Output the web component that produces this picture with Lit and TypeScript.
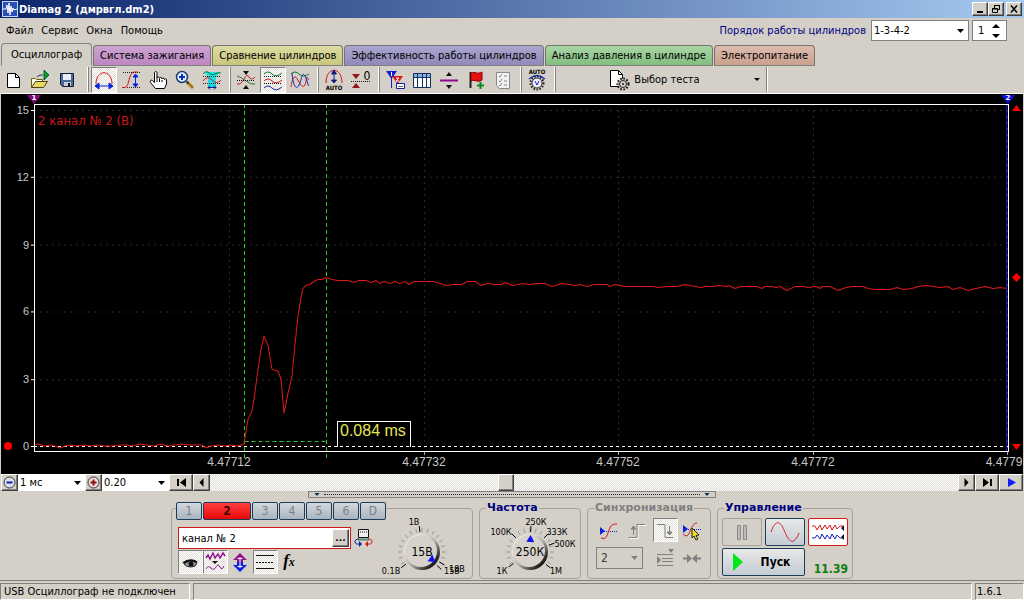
import { LitElement, html, svg, css, TemplateResult } from "lit";
import { customElement, property, state } from "lit/decorators.js";
import { classMap } from "lit/directives/class-map.js";

const ICONS: Record<string, TemplateResult> = {
  page: svg`<path d="M6.500 5.500h8l4 4v10h-12z" fill="#fff" stroke="#000"/><path d="M14.500 5.500v4h4" fill="none" stroke="#000"/>`,
  open: svg`<path d="M3.500 19.500v-9h4l1 1h6v3" fill="#ffe" stroke="#6b5f10"/><path d="M3.500 19.500l4-6h12l-4 6z" fill="#e8d868" stroke="#4a4208"/><path d="M9 9c2-2 4-2 6-2" fill="none" stroke="#333"/><path d="M16 2l5 5-5 5z" fill="#0a9a1a" stroke="#064"/>`,
  save: svg`<path d="M5.500 5.500h13v13h-11l-2-2z" fill="#4a6a96" stroke="#111c38"/><path d="M8 6h8v6H8z" fill="#e8eef8"/><path d="M9 14h7v4H9z" fill="#c8ccd0"/><path d="M13 15h2v3h-2z" fill="#111"/>`,
  hspan: svg`<path d="M4 16c0-15 16-15 16 0" fill="none" stroke="#d01818"/><path d="M3 18h18M7 15l-4 3 4 3zM17 15l4 3-4 3z" fill="#0a20d8" stroke="#0a20d8"/>`,
  vspan: svg`<path d="M3 19.500h3C11 18 9 5 15 4h4" fill="none" stroke="#d01818"/><path d="M4 4.500h17M8 19.500h13" stroke="#222" stroke-dasharray="1 1"/><path d="M16.500 7v11M14 9l2.500-3L19 9zM14 16l2.500 3 2.500-3z" fill="#0a20d8" stroke="#0a20d8"/>`,
  hand: svg`<path d="M9.500 20.500l-5-6c-1-2 1-3 2-2l2 2V5c0-2 2.500-2 2.500 0v5c0-1.500 2.500-1.500 2.500.5 0-1.500 2.500-1.500 2.500.5 0-1.500 2.500-1 2.500.5 0-1.200 2-1 2 .5v4l-2 4.500z" fill="#fff" stroke="#000"/><path d="M11 10v4M13.500 11v3M16 12v2" stroke="#000"/>`,
  zoom: svg`<path d="M14 14l6 6" stroke="#a87a10" stroke-width="3"/><path d="M13.500 13.500l2 2" stroke="#333" stroke-width="2"/><circle cx="9" cy="9" r="5.500" fill="#dff0ff" stroke="#203c78" stroke-width="1.500"/><path d="M6 9h6M9 6v6" stroke="#1028c0" stroke-width="2"/>`,
  zoomwave: svg`<path d="M5 4h14l-3 6v10H8V10z" fill="#18e0e8"/><path d="M3 6q3-4 6-1t6 1 6-1" fill="none" stroke="#087a28"/><path d="M3 13q4-6 9-1t9 0" fill="none" stroke="#c02828"/><path d="M3 8.500h18M3 15.500h18" stroke="#222" stroke-dasharray="1 1"/><path d="M8 19.500h8M10 17.500l-2 2 2 2M14 17.500l2 2-2 2" fill="none" stroke="#102080"/>`,
  cross: svg`<path d="M3 8q4 1 9 5t9 3" fill="none" stroke="#2a7a30"/><path d="M3 16q4 1 7-5t5-2 6 0" fill="none" stroke="#c02020"/><path d="M3 12.500h18" stroke="#111" stroke-dasharray="1 1"/><path d="M9 3h6l-3 4zM9 21h6l-3-4z" fill="#111"/>`,
  waves: svg`<path d="M3 6q4-4 8 0t10-1" fill="none" stroke="#087a28"/><path d="M3 13q4-4 8 0t10-1" fill="none" stroke="#d01818"/><path d="M3 20q4-4 8 0t10-1" fill="none" stroke="#1020a0"/><path d="M3 8.500h18M3 15.500h18" stroke="#111" stroke-dasharray="1 1"/>`,
  overlay: svg`<path d="M3 6q4-4 8 0t10 0" fill="none" stroke="#087a28"/><path d="M3 19C5 5 8 8 11 14s6 6 7-1 2-2 3-1" fill="none" stroke="#d01818"/><path d="M4 5c1 12 4 18 7 12s3-14 6-9 2 8 4 10" fill="none" stroke="#1828c0"/>`,
  autoscale: svg`<path d="M4 15C4-2 20-2 20 15" fill="none" stroke="#d01818"/><path d="M12 5v8M9.500 6l2.500-4 2.500 4zM9.500 12l2.500 3 2.500-3z" fill="#102080" stroke="#102080"/><text x="12" y="22" class="tiny">AUTO</text>`,
  zero: svg`<path d="M3 6h8l-4 5z" fill="#901818"/><path d="M3 20h8l-4-5z" fill="#901818"/><path d="M2 13.500h19" stroke="#111" stroke-dasharray="1 1"/><text x="18" y="12" class="glyph">0</text>`,
  markers: svg`<path d="M3 3h11L8.500 11z" fill="#1020d0"/><path d="M9 8h11l-5.500 8z" fill="#d81818"/><path d="M8.500 10v10M14.500 14v5" stroke="#1020d0"/><path d="M13.500 15.500h8v5h-8z" fill="#fff" stroke="#1020a0"/><path d="M8.500 4v4M13 10h3l-3 3h3" fill="none" stroke="#fff"/><path d="M15 18.500h5" stroke="#667"/>`,
  table: svg`<path d="M3.500 5.500h17v14h-17z" fill="#fff" stroke="#103060"/><path d="M4 6h16v3H4z" fill="#8ab0e0"/><path d="M3.500 9.500h17M7.500 6v13M12.500 6v13M16.500 6v13" stroke="#103060"/>`,
  split: svg`<path d="M3 12.500h18" stroke="#900890" stroke-width="2"/><path d="M9 8h6l-3-4zM9 17h6l-3 4z" fill="#111"/>`,
  flag: svg`<path d="M6.500 4v16" stroke="#222" stroke-width="2"/><path d="M7 5c4-2 6 2 11-1v8c-4 3-7-1-11 1z" fill="#e81010" stroke="#800"/><path d="M13 17.500h7M16.500 14v7" stroke="#0a8a1a" stroke-width="2"/>`,
  report: svg`<path d="M5.500 4.500h13v16h-10l-3-3z" fill="#f2f2f2" stroke="#888"/><path d="M8 8l1 1 2-3M8 13l1 1 2-3M8 17l1 1 2-3M13 8h3M13 13h3M13 17h3" fill="none" stroke="#888"/>`,
  autoknob: svg`<text x="12" y="6" class="tiny">AUTO</text><path d="M4 11q8-7 16 0" fill="none" stroke="#1838b8" stroke-width="1.500"/><circle cx="12" cy="15" r="6.500" fill="none" stroke="#222" stroke-width="2" stroke-dasharray="1.500 1.500"/><circle cx="12" cy="15" r="5" fill="#eef" stroke="#333"/><path d="M10 13l2 4 2-4" fill="none" stroke="#1828c0"/>`,
  test: svg`<path d="M3.500 2.500h8l4 4v12h-12z" fill="#fff" stroke="#000"/><path d="M11.500 2.500v4h4" fill="none" stroke="#000"/><circle cx="16" cy="16" r="5.500" fill="#d4d0c8" stroke="#111" stroke-width="2" stroke-dasharray="1.600 1.600"/><circle cx="16" cy="16" r="3.500" fill="#d4d0c8" stroke="#222"/><circle cx="16" cy="16" r="1" fill="#222"/>`,
  eye: svg`<path d="M6 14q6-5 13-1-1 4-6 4t-7-3z" fill="#999" stroke="#222"/><circle cx="13" cy="14" r="2.500" fill="#111"/><path d="M5 13q7-5 14-1" fill="none" stroke="#111" stroke-width="2"/>`,
  smooth: svg`<path d="M3 8l2-3 2 4 3-6 2 5 3-4 2 4 3-5 2 3" fill="none" stroke="#901890" stroke-width="1.500"/><path d="M9 11h6l-3 3z" fill="#111"/><path d="M3 19q2-4 5-1t5-1 4 0 4-1" fill="none" stroke="#901890"/>`,
  updown: svg`<path d="M12 3l7 7h-4v4H9v-4H5z" fill="#901090"/><path d="M12 22l7-7h-4v-3H9v3H5z" fill="#1020e0"/><path d="M12 7v11M9.500 8.500h5M9.500 16.500h5" stroke="#fff"/>`,
  levels: svg`<path d="M3 5.500h18M3 18.500h18" stroke="#111"/><path d="M3 12.500h18" stroke="#111" stroke-dasharray="2 1"/>`,
  fx: svg`<text x="11" y="16" class="fx">f<tspan class="fxsub">x</tspan></text>`,
  screen: svg`<path d="M7.500 3.500h10v8h-10z" fill="#eee" stroke="#111"/><path d="M7 13.500h11" stroke="#578a70" stroke-width="2"/><path d="M9 6h7" stroke="#111" stroke-dasharray="1 1"/><path d="M8 13c-6 0-5 6 0 5" fill="none" stroke="#1020a0"/><path d="M8 15v6l3-3z" fill="#1020a0"/><path d="M17 13c6 0 5 6 0 5" fill="none" stroke="#d01818"/><path d="M17 15v6l-3-3z" fill="#d01818"/>`,
  sync: svg`<path d="M4 9v8l5-4z" fill="#1020e0"/><path d="M6 13.500h15" stroke="#1020e0" stroke-dasharray="1 1"/><path d="M5 20c6 2 6-3 8-8s3-6 8-6" fill="none" stroke="#d01818"/>`,
  rise: svg`<path d="M5 20.500h8v-13h8" fill="none" stroke="#fff"/><path d="M4 19.500h8v-13h8" fill="none" stroke="#808080"/><path d="M8.500 17V9M6 11l2.500-3 2.500 3z" fill="#808080" stroke="#808080"/>`,
  fall: svg`<path d="M4 6.500h8v13h8" fill="none" stroke="#808080"/><path d="M16.500 8v8M14 14l2.500 3 2.500-3z" fill="#808080" stroke="#808080"/>`,
  syncpick: svg`<path d="M3 7v8l5-4z" fill="#1020e0"/><path d="M6 11.500h15" stroke="#1020e0" stroke-dasharray="1 1"/><path d="M3 16c5 5 6-1 8-5s3-6 6-6" fill="none" stroke="#d01818"/><path d="M12 10l7 7-3 .5 2 3.500-2 1-2-4-2 2z" fill="#f0e020" stroke="#222"/>`,
  hold: svg`<path d="M4 8.500h16M9 12.500h11M9 15.500h11M4 19.500h16" stroke="#808080"/><path d="M4 10l4 4-4 4zM15 3h6l-3 4z" fill="#808080"/>`,
  meet: svg`<path d="M3 12.500h5M16 12.500h5" stroke="#808080" stroke-width="2"/><path d="M7 8l5 4.500L7 17zM17 8l-5 4.500 5 4.500z" fill="#808080"/>`,
};

const icon = (name: string) =>
  html`<svg class="icon" viewBox="0 0 24 24" aria-hidden="true">${ICONS[name]}</svg>`;

const TOOL_GROUPS: { name: string; label: string; on?: boolean }[][] = [
  [
    { name: "page", label: "Новый" },
    { name: "open", label: "Открыть" },
    { name: "save", label: "Сохранить" },
  ],
  [
    { name: "hspan", label: "Измерение по горизонтали", on: true },
    { name: "vspan", label: "Измерение по вертикали" },
    { name: "hand", label: "Перемещение" },
    { name: "zoom", label: "Увеличение" },
    { name: "zoomwave", label: "Масштаб участка" },
  ],
  [
    { name: "cross", label: "Совместить нули" },
    { name: "waves", label: "Раздельно", on: true },
    { name: "overlay", label: "Вместе" },
  ],
  [
    { name: "autoscale", label: "Автомасштаб" },
    { name: "zero", label: "Ноль" },
  ],
  [
    { name: "markers", label: "Маркеры" },
    { name: "table", label: "Таблица" },
    { name: "split", label: "Разделить" },
    { name: "flag", label: "Добавить метку" },
    { name: "report", label: "Отчёт" },
  ],
  [{ name: "autoknob", label: "Автонастройка" }],
];

const TABS = [
  { text: "Осциллограф", tone: "plain" },
  { text: "Система зажигания", tone: "violet" },
  { text: "Сравнение цилиндров", tone: "olive" },
  { text: "Эффективность работы цилиндров", tone: "indigo" },
  { text: "Анализ давления в цилиндре", tone: "green" },
  { text: "Электропитание", tone: "salmon" },
];

/* Plot canvas: user units of the view box. */
const VIEW = { x: 34, y: 104, w: 974, h: 348 };
const Y_ZERO = 447;
const Y_STEP = 67.4;
const Y_LABELS = [0, 3, 6, 9, 12, 15];
const X_LABELS = [
  { x: 229, text: "4.47712" },
  { x: 424, text: "4.47732" },
  { x: 618, text: "4.47752" },
  { x: 813, text: "4.47772" },
  { x: 1007, text: "4.4779" },
];
const X_LABEL_MAX = 1004;
const yAt = (v: number) => Math.round(Y_ZERO - (v / 3) * Y_STEP);

const SIGNAL =
  "34,446 38,445 45,447 50,446 55,447 60,449 65,447 70,446 77,447 83,446 90,447 97,446 104,447 112,447 120,446 127,446 132,447 140,445 147,446 155,447 160,445 168,447 175,446 182,445 190,446 202,446 206,449 211,447 218,446 225,447 231,446 238,447 244,445 " +
  "246,432 248,420 252,412 254,400 258,370 261,350 264,337 268,346 272,370 278,372 281,380 284,414 288,394 292,377 295,345 298,317 301,298 303,289 306,286 310,285 314,282 318,280 322,280 326,278 332,280 338,281 348,281 354,283 359,281 366,281 371,283 376,281 380,284 384,282 390,284 395,282 400,284 405,282 409,285 414,282 430,282 434,282 440,284 446,286 453,285 462,285 467,282 475,282 481,286 488,284 495,285 502,285 505,283 513,286 522,284 530,285 537,284 545,284 552,287 562,284 570,285 575,286 580,285 587,287 594,285 607,285 610,287 615,285 625,287 653,287 658,288 667,287 677,287 685,285 690,286 696,287 700,288 706,287 713,287 719,286 726,287 729,286 735,289 741,287 757,287 762,289 765,287 772,287 776,288 780,287 787,291 795,287 804,287 808,288 816,287 820,289 823,287 830,287 838,291 846,288 853,287 863,287 868,289 875,290 890,290 897,288 903,290 912,289 918,287 927,286 933,287 940,288 948,287 953,290 960,288 968,291 976,289 985,287 993,289 1000,288 1007,289";

interface DialMark {
  text: string;
  x: number;
  y: number;
}

@customElement("dial-knob")
class DialKnob extends LitElement {
  @property() value = "";
  @property({ type: Number }) angle = 0;
  @property({ attribute: false }) marks: DialMark[] = [];
  @property({ attribute: false }) majors: number[] = [];

  static styles = css`
    :host {
      display: block;
    }
    svg {
      display: block;
      width: 92px;
      height: 64px;
      overflow: visible;
      font-family: "DejaVu Sans Condensed", "DejaVu Sans", sans-serif;
      font-stretch: condensed;
    }
    .mark {
      font-size: 9px;
      text-anchor: middle;
    }
    .value {
      font-size: 12px;
      text-anchor: middle;
    }
  `;

  private tick(a: number, major: boolean) {
    const r = ((a - 90) * Math.PI) / 180;
    const at = (d: number) => [46 + Math.cos(r) * d, 38 + Math.sin(r) * d];
    const [x1, y1] = at(20);
    const [x2, y2] = at(major ? 26 : 24);
    return svg`<line x1=${x1} y1=${y1} x2=${x2} y2=${y2} stroke=${major ? "#000" : "#999"}></line>`;
  }

  render() {
    const minors = Array.from({ length: 17 }, (_, i) => -120 + i * 15);
    return html`<svg viewBox="0 0 92 64" role="img" aria-label=${this.value}>
      <defs>
        <linearGradient id="rim" x1="0" y1="0" x2="1" y2="1">
          <stop offset="0.2" stop-color="#f4f2ee"></stop>
          <stop offset="0.55" stop-color="#a8a49c"></stop>
          <stop offset="0.85" stop-color="#101010"></stop>
        </linearGradient>
      </defs>
      ${minors.map((a) => this.tick(a, false))}
      ${this.majors.map((a) => this.tick(a, true))}
      <circle cx="46" cy="38" r="18" fill="url(#rim)"></circle>
      <circle cx="45" cy="37" r="16" fill="#d6d2ca"></circle>
      <path d="M46 21l4 7h-8z" fill="#1010f0" transform="rotate(${this.angle} 46 38)"></path>
      <text class="value" x="46" y="42">${this.value}</text>
      ${this.marks.map((m) => svg`<text class="mark" x=${m.x} y=${m.y}>${m.text}</text>`)}
    </svg>`;
  }
}

@customElement("app-root")
class AppRoot extends LitElement {
  @state() private tab = 0;
  @state() private channel = 1;

  static styles = css`
    :host {
      display: flex;
      flex-direction: column;
      min-height: 100vh;
      box-sizing: border-box;
      background: #d4d0c8;
      color: #000;
      font: 11px/13px "DejaVu Sans Condensed", "DejaVu Sans", sans-serif;
      font-stretch: condensed;
      overflow: hidden;
    }
    * {
      box-sizing: border-box;
    }
    button,
    input,
    select {
      font: inherit;
      color: inherit;
      margin: 0;
      padding: 0;
      border-radius: 0;
    }
    .icon {
      display: block;
      width: 24px;
      height: 24px;
      flex: none;
    }
    .tiny {
      font: bold 6px "DejaVu Sans Condensed", sans-serif;
      text-anchor: middle;
    }
    .glyph {
      font: 12px "DejaVu Sans Condensed", sans-serif;
      text-anchor: middle;
    }
    .fx {
      font: italic bold 17px "Liberation Serif", serif;
      text-anchor: middle;
    }
    .fxsub {
      font-size: 12px;
    }

    .title {
      display: flex;
      align-items: center;
      height: 18px;
      padding: 0 2px;
      background: linear-gradient(90deg, #0a246a, #a6caf0);
      color: #fff;
      font-size: 11px;
      font-weight: bold;
    }
    .logo {
      width: 16px;
      height: 16px;
      margin-right: 1px;
    }
    .title h1 {
      margin: 0;
      font: inherit;
      flex: 1;
    }
    .raised {
      display: grid;
      place-items: center;
      background: #d4d0c8;
      border: 1px solid;
      border-color: #fff #404040 #404040 #fff;
      box-shadow: inset -1px -1px #808080;
    }
    .win {
      width: 16px;
      height: 14px;
    }
    .win svg {
      width: 12px;
      height: 10px;
    }
    .win.close {
      margin-left: 2px;
    }

    .menu {
      display: flex;
      align-items: center;
      height: 25px;
      padding: 0 17px 0 6px;
    }
    .menu nav {
      display: flex;
      gap: 8px;
      flex: 1;
    }
    .menu a {
      color: inherit;
      text-decoration: none;
    }
    .order {
      color: #000080;
      margin-right: 5px;
    }
    .combo {
      display: grid;
      align-items: center;
      background: #fff;
    }
    .combo > * {
      grid-area: 1 / 1;
    }
    .combo select {
      appearance: none;
      width: 100%;
      height: 100%;
      padding: 0 2px;
      border: 0;
      background: none;
    }
    .combo svg {
      justify-self: end;
      width: 7px;
      height: 4px;
      margin-right: 4px;
      pointer-events: none;
    }
    .cylinders {
      width: 98px;
      height: 21px;
      border: 1px solid #808080;
    }
    .spin {
      display: flex;
      align-items: center;
      width: 35px;
      height: 21px;
      margin-left: 3px;
      padding: 0 6px 0 5px;
      border: 1px solid #808080;
      background: #fff;
    }
    .spin input {
      flex: 1;
      min-width: 0;
      border: 0;
      background: none;
      outline: none;
    }
    .spin svg {
      width: 8px;
      height: 14px;
    }

    .tabs {
      display: flex;
      align-items: flex-end;
      gap: 1px;
      height: 23px;
      padding-left: 1px;
    }
    .tab {
      height: 21px;
      padding: 0 6px;
      border: 1px solid #77736c;
      border-bottom-color: #808080;
      border-radius: 4px 4px 0 0;
      white-space: nowrap;
    }
    .tab.current {
      height: 23px;
      padding: 0 9px;
      border-color: #808080;
      border-bottom-color: #d4d0c8;
    }
    .plain {
      background: #d4d0c8;
    }
    .violet {
      background: linear-gradient(#cda4d2, #bd86c2);
    }
    .olive {
      background: linear-gradient(#dcdca4, #c9c67a);
    }
    .indigo {
      background: linear-gradient(#aaa6ce, #918aba);
    }
    .green {
      background: linear-gradient(#a8d6a4, #84be80);
    }
    .salmon {
      background: linear-gradient(#dcbcae, #cba08e);
    }

    .toolbar {
      display: flex;
      align-items: stretch;
      height: 28px;
      padding: 1px 0;
      border-bottom: 1px solid #fff;
    }
    .group {
      display: flex;
      gap: 1px;
      padding-right: 4px;
      margin-right: 3px;
      border-right: 1px solid #fff;
      box-shadow: 1px 0 #808080;
    }
    .group:first-child {
      padding-right: 7px;
    }
    .tool {
      width: 26px;
      height: 26px;
      border: 1px solid transparent;
      background: none;
    }
    .on {
      background: #fff conic-gradient(#e2dfd9 25%, #fff 0 50%, #e2dfd9 0 75%, #fff 0) 0 0 / 2px 2px;
      border: 1px solid;
      border-color: #808080 #fff #fff #808080;
    }
    .test {
      display: grid;
      grid-template-columns: 1fr auto 1fr;
      align-items: center;
      width: 208px;
      padding-left: 10px;
      border: 0;
      background: none;
    }
    .test .icon {
      justify-self: end;
      margin-right: 3px;
    }
    .test .caret {
      justify-self: end;
      width: 6px;
      height: 3px;
      margin-right: 6px;
    }
    .divider {
      width: 2px;
      border-left: 1px solid #808080;
      background: #fff;
    }

    .chart {
      flex: 1;
      display: grid;
      grid-template-columns: 33px 1fr 15px;
      grid-template-rows: 10px minmax(200px, 1fr) 23px;
      margin: 0 1px;
      background: #000;
      color: #c8c8c8;
      font: 12px/14px "Liberation Sans", Arial, sans-serif;
    }
    .plot {
      grid-area: 2 / 2;
      position: relative;
    }
    .plot > svg {
      position: absolute;
      width: 100%;
      height: 100%;
      overflow: visible;
    }
    .plot path,
    .plot polyline,
    .plot line {
      vector-effect: non-scaling-stroke;
    }
    .ylabel {
      position: absolute;
      right: 100%;
      margin-right: 5px;
      transform: translateY(-50%);
      font-size: 11px;
    }
    .xlabel {
      position: absolute;
      top: 100%;
      margin-top: 4px;
      transform: translateX(-50%);
    }
    .trace {
      position: absolute;
      left: 4px;
      top: 9px;
      color: #c81818;
      font: 13px/16px "DejaVu Sans Condensed", "DejaVu Sans", sans-serif;
      font-stretch: condensed;
    }
    .delta {
      position: absolute;
      width: 74px;
      height: 26px;
      padding: 0 2px;
      border: 1px solid #fff;
      border-bottom: 0;
      color: #e4e450;
      font-size: 16px;
      line-height: 18px;
      white-space: nowrap;
    }
    .cursor {
      position: absolute;
      bottom: 100%;
      width: 14px;
      height: 9px;
      transform: translateX(-50%);
      clip-path: polygon(0 0, 100% 0, 50% 100%);
      color: #fff;
      font: bold 7px/7px "DejaVu Sans", sans-serif;
      text-align: center;
    }
    .cursor.first {
      left: 0;
      background: #800880;
    }
    .cursor.second {
      left: 100%;
      background: #1010e0;
    }
    .dot {
      grid-area: 2 / 1;
      align-self: end;
      width: 8px;
      height: 8px;
      margin: 0 0 1px 3px;
      border-radius: 50%;
      background: #f00;
    }
    .range {
      grid-area: 2 / 3;
      display: flex;
      flex-direction: column;
      align-items: center;
      justify-content: space-between;
      padding-left: 2px;
    }
    .range svg {
      width: 9px;
      height: 9px;
    }

    .scroll {
      display: flex;
      height: 17px;
      margin: 0 1px;
    }
    .small {
      width: 17px;
      flex: none;
    }
    .small svg,
    .wide svg {
      width: 13px;
      height: 13px;
    }
    .wide {
      width: 24px;
      flex: none;
    }
    .scale {
      width: 67px;
    }
    .bar {
      appearance: none;
      flex: 1;
      min-width: 0;
      height: 17px;
      background: #fff conic-gradient(#dedad4 25%, #fff 0 50%, #dedad4 0 75%, #fff 0) 0 0 / 2px 2px;
    }
    .bar::-webkit-slider-thumb {
      appearance: none;
      width: 16px;
      height: 17px;
      background: #d4d0c8;
      border: 1px solid;
      border-color: #fff #404040 #404040 #fff;
      box-shadow: inset -1px -1px #808080;
    }

    .splitter {
      align-self: center;
      display: flex;
      align-items: center;
      justify-content: space-between;
      width: 408px;
      height: 7px;
      padding: 0 5px;
      border: 1px solid #808080;
    }
    .splitter svg {
      width: 6px;
      height: 3px;
    }
    .splitter i {
      flex: 1;
      margin: 0 4px;
      border-top: 1px dotted #222;
    }

    .panel {
      display: flex;
      justify-content: center;
      gap: 6px;
      padding: 4px 0 1px;
      border-bottom: 1px solid #808080;
    }
    fieldset {
      min-width: 0;
      margin: 0;
      padding: 0 4px;
      border: 1px solid #a5a199;
      border-radius: 4px;
    }
    legend {
      height: 12px;
      padding: 0 1px;
      margin-left: 2px;
      font: bold 11px/12px "DejaVu Sans", sans-serif;
      color: #000080;
    }
    .muted legend {
      color: #808080;
    }
    .channels {
      display: flex;
      gap: 1px;
      margin-left: 0;
      padding: 0;
    }
    .channel {
      width: 26px;
      height: 18px;
      border: 1px solid #1c3c5c;
      border-radius: 2px;
      background: linear-gradient(#d4d8dc, #a8b4c0);
      color: #7c8084;
      font: 12px/14px "DejaVu Sans Condensed", "DejaVu Sans", sans-serif;
    }
    .channel.current {
      width: 48px;
      background: linear-gradient(#ff4040, #e80808);
      color: #400;
      font-weight: bold;
    }
    .input-body {
      display: flex;
    }
    .source {
      width: 200px;
      padding: 12px 0 0 2px;
    }
    .line {
      display: flex;
      align-items: center;
    }
    .name {
      display: flex;
      width: 177px;
      height: 22px;
      border: 1px solid #d01818;
      background: #fff;
      padding: 1px;
    }
    .name input {
      flex: 1;
      min-width: 0;
      border: 0;
      outline: 0;
      padding: 0 2px;
      background: none;
    }
    .name button {
      width: 17px;
      font: bold 9px/9px "DejaVu Sans", sans-serif;
    }
    .line .tool {
      height: 24px;
      padding: 0;
      width: 25px;
      flex: none;
    }
    .line .tool .icon {
      margin: -1px;
    }
    .sync-body {
      display: grid;
      grid-template-columns: 30px 28px 28px 27px;
      align-items: center;
      justify-items: center;
      padding: 4px 0 0 1px;
      row-gap: 4px;
    }
    .sync-body .tool {
      width: 25px;
      height: 24px;
    }
    .sync-body .tool .icon {
      margin: -1px;
    }
    .trigger {
      grid-column: span 2;
      justify-self: start;
      margin-left: 3px;
      width: 47px;
      height: 22px;
      border: 1px solid #808080;
      background: none;
      color: #404040;
      font-size: 12px;
    }
    .trigger select {
      padding-left: 4px;
    }
    .run-body {
      display: grid;
      grid-template-columns: 40px 40px 40px;
      grid-template-rows: 28px 28px;
      gap: 2px 3px;
      padding-top: 4px;
    }
    .mode {
      display: grid;
      place-items: center;
      border: 1px solid #1c3c5c;
      border-radius: 2px;
      background: linear-gradient(#e8e8e8, #c4ccd4);
    }
    .mode svg {
      width: 32px;
      height: 22px;
    }
    .mode.idle {
      border-color: #a5a199;
      background: #d4d0c8;
    }
    .mode.live {
      border: 1px solid #e01818;
      background: #fff;
    }
    .mode.start {
      grid-column: span 2;
      display: flex;
      align-items: center;
      padding: 0 10px;
      font: bold 12px/14px "DejaVu Sans Condensed", "DejaVu Sans", sans-serif;
    }
    .mode.start svg {
      width: 10px;
      height: 20px;
    }
    .start span {
      flex: 1;
      padding-left: 14px;
      text-align: center;
    }
    .clock {
      align-self: end;
      justify-self: end;
      color: #107c10;
      font: bold 12px/14px "DejaVu Sans Condensed", "DejaVu Sans", sans-serif;
    }

    .status {
      display: flex;
      gap: 3px;
      height: 19px;
      padding-top: 2px;
    }
    .cell {
      padding: 1px 3px 0;
      border: 1px solid;
      border-color: #808080 #fff #fff #808080;
      white-space: nowrap;
    }
    .cell.link {
      width: 190px;
    }
    .cell.rest {
      flex: 1;
    }
    .cell.version {
      width: 49px;
      padding-left: 1px;
    }
  `;

  private arrow(color = "#000") {
    return html`<svg viewBox="0 0 7 4" aria-hidden="true"><path d="M0 0h7L3.500 4z" fill=${color}></path></svg>`;
  }

  private renderTitle() {
    return html`<header class="title">
      <svg class="logo" viewBox="0 0 16 16" aria-hidden="true">
        <rect x="0.5" y="0.5" width="15" height="15" fill="#2a50b8" stroke="#c8d8ff"></rect>
        <path d="M1 8h3l1-4 1 8 1-10 1 12 1-9 1 6 1-4 1 2 3-1" fill="none" stroke="#fff"></path>
      </svg>
      <h1>Diamag 2 (дмрвгл.dm2)</h1>
      <button class="raised win" aria-label="Свернуть">
        <svg viewBox="0 0 12 10"><path d="M3 8h6" stroke="#000" stroke-width="2"></path></svg>
      </button>
      <button class="raised win" aria-label="Восстановить">
        <svg viewBox="0 0 12 10">
          <path d="M4.500 4V1.500h5v4H8M4 1.500h6M2.500 4.500h5v4h-5zM2 5h6" fill="none" stroke="#000"></path>
        </svg>
      </button>
      <button class="raised win close" aria-label="Закрыть">
        <svg viewBox="0 0 12 10"><path d="M3 1.500l6 7M9 1.500l-6 7" stroke="#000" stroke-width="1.500"></path></svg>
      </button>
    </header>`;
  }

  private renderMenu() {
    return html`<div class="menu">
      <nav>${["Файл", "Сервис", "Окна", "Помощь"].map((t) => html`<a href="#">${t}</a>`)}</nav>
      <label class="order" for="order">Порядок работы цилиндров</label>
      <div class="combo cylinders">
        <select id="order">
          <option>1-3-4-2</option>
        </select>
        ${this.arrow()}
      </div>
      <div class="spin">
        <input aria-label="Номер цилиндра" value="1" />
        <svg viewBox="0 0 8 14" aria-hidden="true"><path d="M0 4h8L4 0zM0 10h8l-4 4z"></path></svg>
      </div>
    </div>`;
  }

  private renderToolbar() {
    return html`<div class="toolbar">
      ${TOOL_GROUPS.map(
        (g) => html`<div class="group">
          ${g.map(
            (t) => html`<button class=${classMap({ tool: true, on: !!t.on })} aria-label=${t.label}>
              ${icon(t.name)}
            </button>`
          )}
        </div>`
      )}
      <button class="test">
        ${icon("test")}<span>Выбор теста</span>
        <svg class="caret" viewBox="0 0 6 3" aria-hidden="true"><path d="M0 0h6L3 3z"></path></svg>
      </button>
      <span class="divider"></span>
    </div>`;
  }

  private renderChart() {
    const left = (x: number) => `left:${((x - VIEW.x) / VIEW.w) * 100}%`;
    const top = (y: number) => `top:${((y - VIEW.y) / VIEW.h) * 100}%`;
    return html`<section class="chart">
      <span class="dot"></span>
      <div class="plot">
        <svg viewBox="${VIEW.x} ${VIEW.y} ${VIEW.w} ${VIEW.h}" preserveAspectRatio="none" aria-hidden="true">
          ${Y_LABELS.slice(1).map(
            (v) => svg`<line x1="34" x2="1007" y1=${yAt(v) + 0.5} y2=${yAt(v) + 0.5} stroke="#2a2a22" stroke-dasharray="2 4"></line>`
          )}
          ${Y_LABELS.map(
            (v) => svg`<line x1="31" x2="34" y1=${yAt(v) + 0.5} y2=${yAt(v) + 0.5} stroke="#fff"></line>`
          )}
          ${X_LABELS.map(
            (t) => svg`<line x1=${t.x + 0.5} x2=${t.x + 0.5} y1="104" y2="452" stroke="#2a2a22" stroke-dasharray="2 4"></line>
              <line x1=${t.x + 0.5} x2=${t.x + 0.5} y1="452" y2="456" stroke="#aaa"></line>`
          )}
          <path d="M34 447.500H1008" stroke="#fff" stroke-dasharray="3 3"></path>
          <path d="M244.500 104V461M326.500 104V461M244.500 442.500H326.500" fill="none" stroke="#28c828" stroke-dasharray="4 3"></path>
          <polyline points=${SIGNAL} fill="none" stroke="#e01818"></polyline>
          <path d="M1006.500 104V452" stroke="#1010e0"></path>
          <path d="M34.500 104.500H1008.500V452.500H34.500z" fill="none" stroke="#fff"></path>
        </svg>
        <span class="cursor first">1</span>
        <span class="cursor second">2</span>
        <span class="trace">2 канал № 2 (В)</span>
        ${Y_LABELS.map((v) => html`<span class="ylabel" style=${top(yAt(v))}>${v}</span>`)}
        ${X_LABELS.map(
          (t) => html`<span class="xlabel" style=${left(Math.min(t.x, X_LABEL_MAX))}>${t.text}</span>`
        )}
        <output class="delta" style="${left(337)};${top(422)}">0.084 ms</output>
      </div>
      <div class="range">
        <svg viewBox="0 0 9 9" aria-hidden="true"><path d="M0 7h9L4.500 1z" fill="#f00"></path></svg>
        <svg viewBox="0 0 9 9" aria-hidden="true"><path d="M4.500 0L9 4.500 4.500 9 0 4.500z" fill="#f00"></path></svg>
        <svg viewBox="0 0 9 9" aria-hidden="true"><path d="M0 2h9L4.500 8z" fill="#f00"></path></svg>
      </div>
    </section>`;
  }

  private glyphButton(cls: string, label: string, d: string, fill = "#000") {
    return html`<button class="raised ${cls}" aria-label=${label}>
      <svg viewBox="0 0 13 13"><path d=${d} fill=${fill}></path></svg>
    </button>`;
  }

  private renderScroll() {
    const combo = (label: string, text: string) => html`<div class="combo scale">
      <select aria-label=${label}>
        <option>${text}</option>
      </select>
      ${this.arrow()}
    </div>`;
    return html`<div class="scroll">
      <button class="raised small" aria-label="Уменьшить">
        <svg viewBox="0 0 13 13">
          <circle cx="6.500" cy="6.500" r="5.500" fill="#dde" stroke="#333"></circle>
          <path d="M3.500 6.500h6" stroke="#1020a0" stroke-width="2"></path>
        </svg>
      </button>
      ${combo("Развёртка", "1 мс")}
      <button class="raised small" aria-label="Увеличить">
        <svg viewBox="0 0 13 13">
          <circle cx="6.500" cy="6.500" r="5.500" fill="#edd" stroke="#333"></circle>
          <path d="M3.500 6.500h6M6.500 3.500v6" stroke="#901010" stroke-width="2"></path>
        </svg>
      </button>
      ${combo("Масштаб", "0.20")}
      ${this.glyphButton("wide", "В начало", "M2 3h2v7H2zM11 2v9L5 6.500z")}
      ${this.glyphButton("small", "Назад", "M8.500 2v9l-4-4.500z")}
      <input class="bar" type="range" aria-label="Положение" min="0" max="1000" value="393" />
      ${this.glyphButton("small", "Вперёд", "M4.500 2v9l4-4.500z")}
      ${this.glyphButton("wide", "В конец", "M9 3h2v7H9zM2 2v9l6-4.500z")}
      ${this.glyphButton("wide", "Пуск просмотра", "M3 2v9l8-4.500z", "#1020f0")}
    </div>`;
  }

  private renderInput() {
    const names = ["1", "2", "3", "4", "5", "6", "D"];
    const tools = [
      { name: "eye", label: "Видимость", on: true },
      { name: "smooth", label: "Сглаживание", on: true },
      { name: "updown", label: "Инверсия", on: false },
      { name: "levels", label: "Уровни", on: true },
      { name: "fx", label: "Функция", on: false },
    ];
    return html`<fieldset>
      <legend class="channels">
        ${names.map(
          (n, i) => html`<button
            class=${classMap({ channel: true, current: i === this.channel })}
            @click=${() => (this.channel = i)}
          >
            ${n}
          </button>`
        )}
      </legend>
      <div class="input-body">
        <div class="source">
          <div class="line">
            <div class="name">
              <input aria-label="Имя канала" value="канал № 2" />
              <button class="raised" aria-label="Выбрать">...</button>
            </div>
            <button class="tool" aria-label="Экран">${icon("screen")}</button>
          </div>
          <div class="line">
            ${tools.map(
              (t) => html`<button class=${classMap({ tool: true, on: t.on })} aria-label=${t.label}>
                ${icon(t.name)}
              </button>`
            )}
          </div>
        </div>
        <dial-knob
          value="15В"
          angle="127"
          .majors=${[-6, -127, 120, 132]}
          .marks=${[
            { text: "1В", x: 38, y: 11 },
            { text: "0.1В", x: 15, y: 60 },
            { text: "15В", x: 76, y: 60 },
            { text: "18В", x: 81, y: 58 },
          ]}
        ></dial-knob>
      </div>
    </fieldset>`;
  }

  private renderSync() {
    return html`<fieldset class="muted">
      <legend>Синхронизация</legend>
      <div class="sync-body">
        <button class="tool" aria-label="Уровень">${icon("sync")}</button>
        <button class="tool" aria-label="Фронт">${icon("rise")}</button>
        <button class="tool on" aria-label="Спад">${icon("fall")}</button>
        <button class="tool" aria-label="Выбор уровня">${icon("syncpick")}</button>
        <div class="combo trigger">
          <select aria-label="Канал синхронизации">
            <option>2</option>
          </select>
          ${this.arrow("#808080")}
        </div>
        <button class="tool" aria-label="Гистерезис">${icon("hold")}</button>
        <button class="tool" aria-label="Центр">${icon("meet")}</button>
      </div>
    </fieldset>`;
  }

  private renderRun() {
    return html`<fieldset>
      <legend>Управление</legend>
      <div class="run-body">
        <button class="mode idle" aria-label="Пауза">
          <svg viewBox="0 0 32 22">
            <path d="M11.500 4.500h3v14h-3zM17.500 4.500h3v14h-3z" fill="#bbb" stroke="#888"></path>
          </svg>
        </button>
        <button class="mode" aria-label="Однократно">
          <svg viewBox="0 0 32 22">
            <path d="M2 11C6-1 11-1 15 9s9 18 15 3" fill="none" stroke="#d82020"></path>
          </svg>
        </button>
        <button class="mode live" aria-label="Непрерывно">
          <svg viewBox="0 0 32 22">
            <path d="M0 5h3l2 4 3-5 2 5 3-5 2 4 3-4 2 5 3-5 2 4 3-3 3 0" fill="none" stroke="#e01818"></path>
            <path d="M0 17h3l2-3 3 4 2-5 3 5 2-4 3 4 2-5 3 5 2-4 3 3 3 0" fill="none" stroke="#1020c0"></path>
            <path d="M32 4v6l-3-3zM32 13v6l-3-3z" fill="#112"></path>
          </svg>
        </button>
        <button class="mode start">
          <svg viewBox="0 0 10 20" aria-hidden="true"><path d="M0 1l10 9-10 9z" fill="#00e818"></path></svg>
          <span>Пуск</span>
        </button>
        <span class="clock">11.39</span>
      </div>
    </fieldset>`;
  }

  render() {
    return html`
      ${this.renderTitle()} ${this.renderMenu()}
      <div class="tabs" role="tablist">
        ${TABS.map(
          (t, i) => html`<button
            role="tab"
            aria-selected=${i === this.tab}
            class=${classMap({ tab: true, [t.tone]: true, current: i === this.tab })}
            @click=${() => (this.tab = i)}
          >
            ${t.text}
          </button>`
        )}
      </div>
      ${this.renderToolbar()} ${this.renderChart()} ${this.renderScroll()}
      <div class="splitter">${this.arrow("#103050")}<i></i>${this.arrow("#103050")}</div>
      <div class="panel">
        ${this.renderInput()}
        <fieldset>
          <legend>Частота</legend>
          <dial-knob
            value="250К"
            angle="2"
            .majors=${[-125, -45, 2, 45, 70, 128]}
            .marks=${[
              { text: "100К", x: 17, y: 21 },
              { text: "250К", x: 52, y: 11 },
              { text: "333К", x: 73, y: 21 },
              { text: "500К", x: 81, y: 33 },
              { text: "1К", x: 18, y: 60 },
              { text: "1М", x: 72, y: 60 },
            ]}
          ></dial-knob>
        </fieldset>
        ${this.renderSync()} ${this.renderRun()}
      </div>
      <footer class="status">
        <span class="cell link">USB Осциллограф не подключен</span>
        <span class="cell rest"></span>
        <span class="cell version">1.6.1</span>
      </footer>
    `;
  }
}
